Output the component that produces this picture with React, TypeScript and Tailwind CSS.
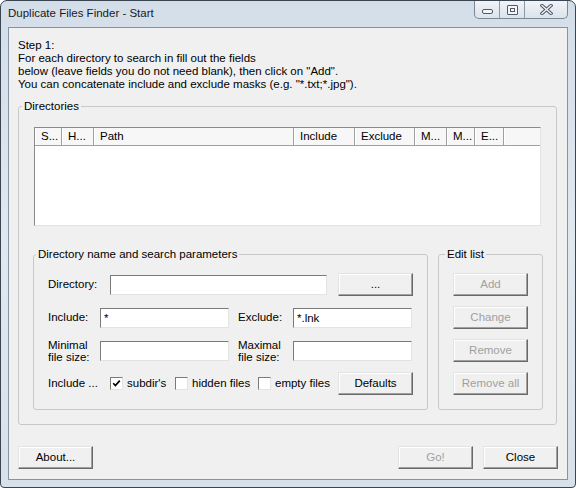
import React from 'react'

const columns = [
  { label: 'S...', w: 'w-[27px]' },
  { label: 'H...', w: 'w-[32px]' },
  { label: 'Path', w: 'w-[200px]' },
  { label: 'Include', w: 'w-[61px]' },
  { label: 'Exclude', w: 'w-[60px]' },
  { label: 'M...', w: 'w-[32px]' },
  { label: 'M...', w: 'w-[28px]' },
  { label: 'E...', w: 'w-[29px]' },
]

function Btn({ children, disabled, className = '' }: { children: React.ReactNode; disabled?: boolean; className?: string }) {
  return (
    <div
      className={
        'flex h-[23px] w-[75px] shrink-0 items-center justify-center border border-t-[#e3e3e3] border-l-[#e3e3e3] border-r-[#696969] border-b-[#696969] bg-[#f0f0f0] shadow-[inset_-1px_-1px_0_#a0a0a0,inset_1px_1px_0_#ffffff] leading-none ' +
        (disabled ? 'text-[#a0a0a0] ' : 'text-black ') +
        className
      }
    >
      {children}
    </div>
  )
}

function Field({ value = '', className = '' }: { value?: string; className?: string }) {
  return (
    <input
      readOnly
      defaultValue={value}
      className={
        'h-[20px] shrink-0 border border-t-[#7a7a7a] border-l-[#7a7a7a] border-r-[#e3e3e3] border-b-[#e3e3e3] bg-white px-[3px] text-[11.5px] leading-none text-black outline-none ' +
        className
      }
    />
  )
}

function Check({ checked, label, className = '' }: { checked?: boolean; label: string; className?: string }) {
  return (
    <div className={'flex shrink-0 items-center gap-[4px] ' + className}>
      <span className="flex h-[13px] w-[13px] items-center justify-center border border-t-[#7a7a7a] border-l-[#7a7a7a] border-r-[#e3e3e3] border-b-[#e3e3e3] bg-white">
        {checked && (
          <svg width="9" height="9" viewBox="0 0 9 9">
            <path d="M1.2 4.2 L3.4 6.6 L7.8 1.6" fill="none" stroke="#000" strokeWidth="1.7" />
          </svg>
        )}
      </span>
      <span>{label}</span>
    </div>
  )
}

function CaptionButtons() {
  return (
    <div className="flex h-[18px] overflow-hidden rounded-b-[5px] border border-t-0 border-[#7b8794] bg-gradient-to-b from-[#f1f4f8] to-[#dce3eb]">
      <div className="flex w-[25px] items-center justify-center border-r border-[#8d98a5]">
        <span className="mt-[3px] h-[5px] w-[11px] rounded-[2px] border border-[#4f5a66] bg-[#f4f6f9]" />
      </div>
      <div className="flex w-[25px] items-center justify-center border-r border-[#8d98a5]">
        <span className="flex h-[10px] w-[11px] items-center justify-center rounded-[1px] border border-[#4f5a66] bg-[#f4f6f9]">
          <span className="h-[4px] w-[5px] border border-[#4f5a66]" />
        </span>
      </div>
      <div className="flex w-[42px] items-center justify-center">
        <svg width="13" height="11" viewBox="0 0 13 11">
          <path d="M2 1.5 L11 9.5 M11 1.5 L2 9.5" stroke="#4f5a66" strokeWidth="3.4" strokeLinecap="square" />
          <path d="M2 1.5 L11 9.5 M11 1.5 L2 9.5" stroke="#eef2f6" strokeWidth="1.4" strokeLinecap="square" />
        </svg>
      </div>
    </div>
  )
}

export default function App() {
  return (
    <div className="flex h-[488px] w-[576px] flex-col overflow-hidden rounded-t-[7px] rounded-b-[4px] border border-[#3a4552] bg-gradient-to-b from-[#d4dee9] via-[#e0e8f0] to-[#d8e1ea] px-[7px] pb-[7px] font-['Liberation_Sans',Arial,sans-serif] text-[11.5px] text-black">
      {/* title bar */}
      <div className="flex h-[26px] shrink-0 items-start justify-between">
        <span className="self-center text-[11.5px] leading-none text-[#1a1a1a]">Duplicate Files Finder - Start</span>
        <CaptionButtons />
      </div>

      {/* client area */}
      <div className="flex h-[453px] flex-col border border-[#8593a3] bg-[#f0f0f0]">
        <div className="pl-[9px] pt-[11px] leading-[13px]">
          <p>Step 1:</p>
          <p>For each directory to search in fill out the fields</p>
          <p>below (leave fields you do not need blank), then click on "Add".</p>
          <p>You can concatenate include and exclude masks (e.g. "*.txt;*.jpg").</p>
        </div>

        <fieldset className="ml-[9px] mt-[9px] w-[539px] rounded-[3px] border border-[#c8c8c8]">
          <legend className="ml-[3px] px-[2px] leading-[13px]">Directories</legend>
          <div className="flex flex-col">
            {/* list view */}
            <div className="ml-[15px] mt-[14px] flex h-[99px] w-[507px] flex-col border border-t-[#8a8a8a] border-l-[#8a8a8a] border-r-[#e3e3e3] border-b-[#e3e3e3] bg-white">
              <div className="flex h-[18px] shrink-0 border-b border-[#a0a0a0] bg-[#f7f7f7]">
                {columns.map((c, i) => (
                  <div
                    key={i}
                    className={c.w + ' flex shrink-0 items-center border-r border-[#a0a0a0] pl-[6px] leading-none shadow-[inset_1px_0_0_#ffffff]'}
                  >
                    {c.label}
                  </div>
                ))}
                <div className="flex-1 shadow-[inset_1px_0_0_#ffffff]" />
              </div>
            </div>

            <div className="mb-[14px] ml-[14px] mt-[22px] flex gap-[10px]">
              {/* directory name and search parameters */}
              <fieldset className="w-[395px] rounded-[3px] border border-[#c8c8c8]">
                <legend className="ml-[2px] px-[2px] leading-[13px]">Directory name and search parameters</legend>
                <div className="flex flex-col gap-[10px] pb-[14px] pl-[14px] pt-[12px]">
                  <div className="flex h-[23px] items-center">
                    <span className="w-[62px] shrink-0">Directory:</span>
                    <Field className="w-[217px]" />
                    <Btn className="ml-[11px]">...</Btn>
                  </div>
                  <div className="flex h-[23px] items-center">
                    <span className="w-[52px] shrink-0">Include:</span>
                    <Field value="*" className="w-[129px]" />
                    <span className="ml-[9px] w-[55px] shrink-0">Exclude:</span>
                    <Field value="*.lnk" className="w-[119px]" />
                  </div>
                  <div className="flex h-[23px] items-center">
                    <span className="w-[52px] shrink-0 leading-[12px]">
                      Minimal
                      <br />
                      file size:
                    </span>
                    <Field className="w-[129px]" />
                    <span className="ml-[9px] w-[55px] shrink-0 leading-[12px]">
                      Maximal
                      <br />
                      file size:
                    </span>
                    <Field className="w-[119px]" />
                  </div>
                  <div className="flex h-[23px] items-center">
                    <span className="w-[62px] shrink-0">Include ...</span>
                    <Check checked label="subdir's" className="w-[65px]" />
                    <Check label="hidden files" className="w-[83px]" />
                    <Check label="empty files" className="w-[80px]" />
                    <Btn>Defaults</Btn>
                  </div>
                </div>
              </fieldset>

              {/* edit list */}
              <fieldset className="w-[105px] rounded-[3px] border border-[#c8c8c8]">
                <legend className="ml-[6px] px-[2px] leading-[13px]">Edit list</legend>
                <div className="flex flex-col gap-[10px] pb-[14px] pl-[14px] pt-[12px]">
                  <Btn disabled>Add</Btn>
                  <Btn disabled>Change</Btn>
                  <Btn disabled>Remove</Btn>
                  <Btn disabled>Remove all</Btn>
                </div>
              </fieldset>
            </div>
          </div>
        </fieldset>

        <div className="mt-[21px] flex gap-[10px] pl-[9px] pr-[9px]">
          <Btn>About...</Btn>
          <Btn disabled className="ml-auto">Go!</Btn>
          <Btn>Close</Btn>
        </div>
      </div>
    </div>
  )
}
